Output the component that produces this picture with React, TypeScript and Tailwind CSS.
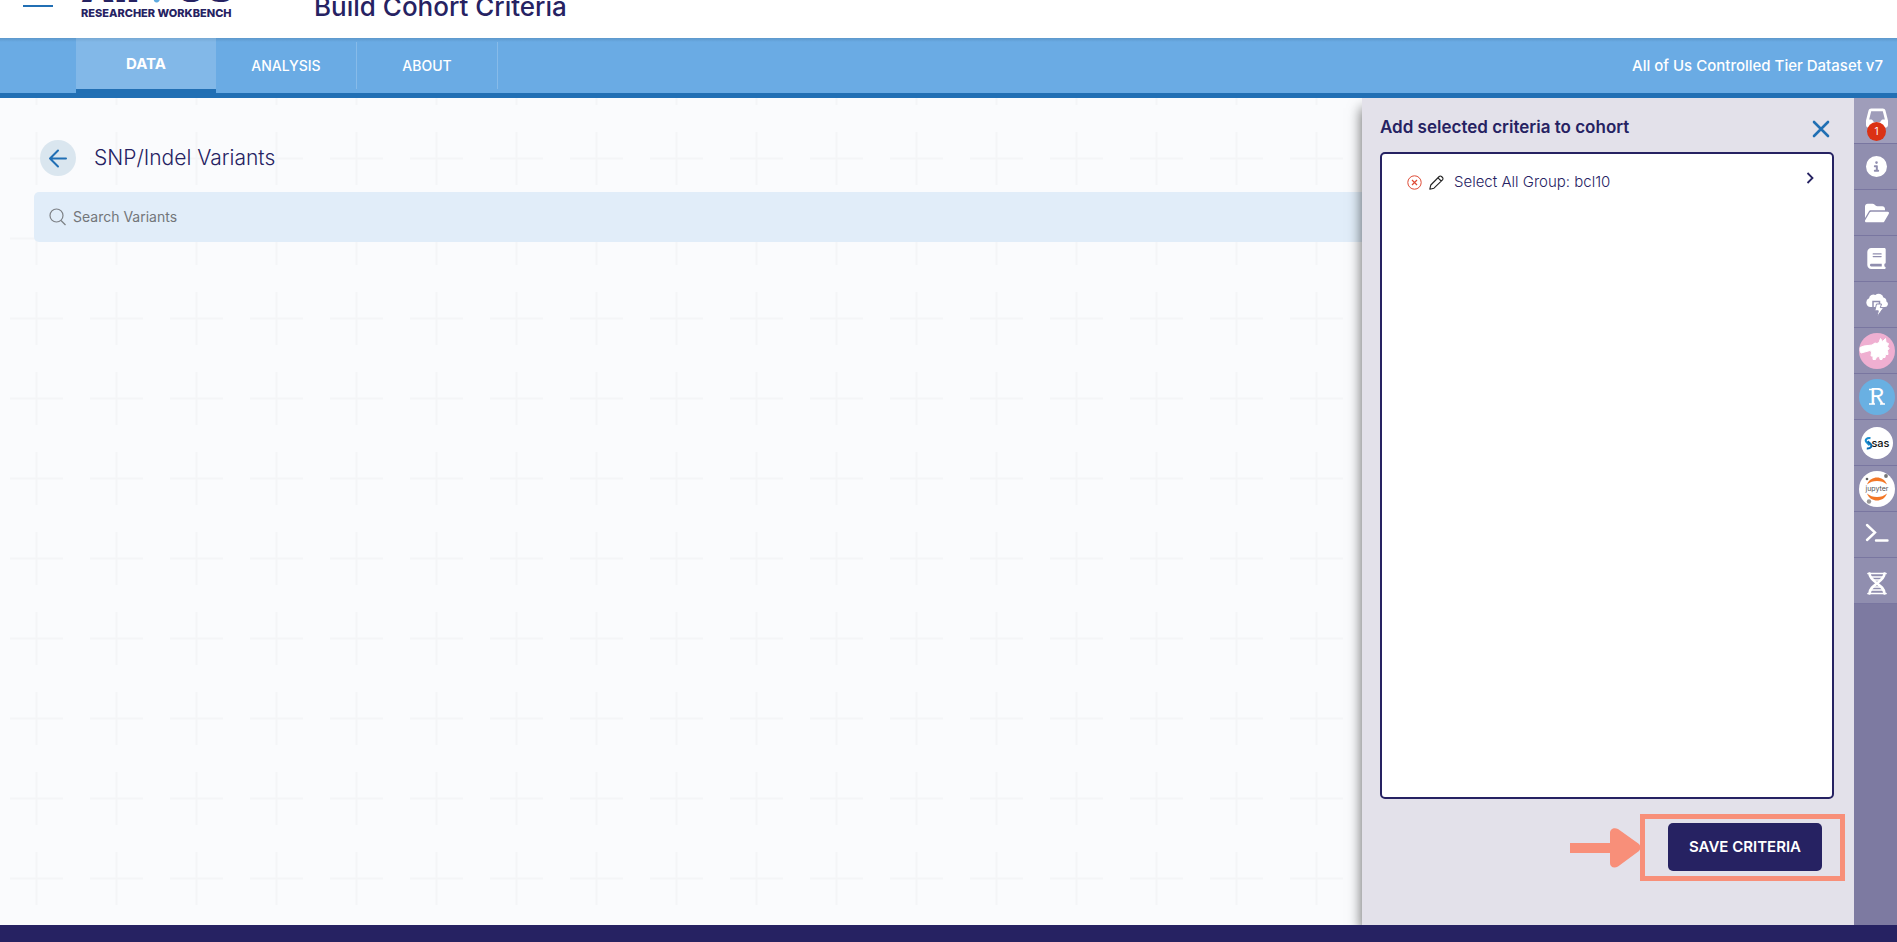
import React from "react";
import { FaInbox, FaCircleInfo, FaFolderOpen, FaBook } from "react-icons/fa6";

const tabs = ["ANALYSIS", "ABOUT"];

function GridPattern() {
  return (
    <svg className="absolute inset-0 h-full w-full" aria-hidden="true">
      <defs>
        <pattern id="crosses" width="80" height="80" x="-4" y="20" patternUnits="userSpaceOnUse">
          <path d="M14 40.5H67" stroke="#f4f5f7" strokeWidth="2" />
          <path d="M40.5 14V67" stroke="#f4f5f7" strokeWidth="2" />
        </pattern>
      </defs>
      <rect width="100%" height="100%" fill="url(#crosses)" />
    </svg>
  );
}

function CloudIcon() {
  return (
    <svg width="24" height="24" viewBox="0 0 24 24">
      <path
        d="M5.500 14a4.600 4.600 0 0 1-1.400-8.800A4.200 4.200 0 0 1 10.400 2a4.800 4.800 0 0 1 8 2.600 3.800 3.800 0 0 1 3 3.800 3 3 0 0 1-1.400 5.600Z"
        fill="#fff"
      />
      <path d="M8 16V8.500h6.500V12" fill="none" stroke="#908eaf" strokeWidth="1.500" />
      <path d="M11.500 11h5l-1.200 3.600h3.400L12 24l1.300-6.200H9.800Z" fill="#fff" stroke="#908eaf" strokeWidth="1" />
    </svg>
  );
}

function PigIcon() {
  return (
    <svg width="36" height="36" viewBox="0 0 36 36">
      <circle cx="18" cy="18" r="18" fill="#efafd1" />
      <path
        d="M1 14.500 5 13l8-1 3-2 2 .5 2-1 1.500-4 2 3 3-3 .5 4 2.500 1-1 3 1.500 2-1.500 2 .5 4-2.500 0-.5 3-2.500 0-.5 2-2 0-.5-3-3 .5-1 2.500-2.500 0 0-3.500-2 0 .5-4-1.500-1.500-9 2.500-1-2.500Z"
        fill="#fff"
        stroke="#fff"
        strokeLinejoin="round"
      />
    </svg>
  );
}

function RIcon() {
  return (
    <svg width="36" height="36" viewBox="0 0 36 36">
      <circle cx="18" cy="18" r="18" fill="#69b0e2" />
      <text x="18" y="25" textAnchor="middle" fontSize="24" fill="#fff" fontFamily="'Liberation Mono', monospace">
        R
      </text>
      <path d="M10 10.500h4M10 25h6M21 25h5" stroke="#fff" strokeWidth="1.300" />
    </svg>
  );
}

function SasIcon() {
  return (
    <svg width="32" height="32" viewBox="0 0 32 32">
      <circle cx="16" cy="16" r="16" fill="#fff" />
      <path d="M9.500 11.200C6 10.400 3.600 13 5.400 15l3.200 3.200" fill="none" stroke="#1c8fd0" strokeWidth="2" />
      <path d="M6.600 14.200 9.600 17c2 2.200.2 4.800-3.800 4.400" fill="none" stroke="#0b6cb4" strokeWidth="2" />
      <text x="19.500" y="20" textAnchor="middle" fontSize="11" fontWeight="500" fill="#111" fontFamily="Inter, sans-serif">
        sas
      </text>
    </svg>
  );
}

function JupyterIcon() {
  return (
    <svg width="36" height="36" viewBox="0 0 36 36">
      <circle cx="18" cy="18" r="18" fill="#fff" />
      <path d="M8 13.500C10 8.500 14 6.500 18 6.500S26 8.500 28 13.500C25 11 22 10 18 10S11 11 8 13.500Z" fill="#f37726" />
      <path d="M8 22.500C10 27.500 14 29.500 18 29.500S26 27.500 28 22.500C25 25 22 26 18 26S11 25 8 22.500Z" fill="#f37726" />
      <circle cx="8" cy="8" r="1.300" fill="#616262" />
      <circle cx="27" cy="5" r="1.900" fill="#767677" />
      <circle cx="10" cy="30.500" r="2.200" fill="#989798" />
      <text x="18" y="19.500" textAnchor="middle" fontSize="7" fill="#4e4e4e" fontFamily="Inter, sans-serif">
        jupyter
      </text>
    </svg>
  );
}

function TerminalIcon() {
  return (
    <svg width="24" height="24" viewBox="0 0 24 24" fill="none" stroke="#fff" strokeWidth="2.400" strokeLinecap="round">
      <path d="m2 2 8 7.500L2 17M11 17.500h11.500" />
    </svg>
  );
}

function DnaIcon() {
  return (
    <svg width="20" height="28" viewBox="0 0 20 28" fill="none" stroke="#fff" strokeLinecap="round">
      <path d="M2.500 6.500c0 8.500 15 11 15 20M17.500 6.500c0 8.500-15 11-15 20" strokeWidth="2.600" />
      <path d="M1 6.500h18M4 10h12M6.500 13h7M6.500 20h7M4 23h12M1 26.500h18" strokeWidth="1.700" />
    </svg>
  );
}

const railItems = [
  { label: "Info", icon: <FaCircleInfo size={21} /> },
  { label: "Files", icon: <FaFolderOpen size={24} /> },
  { label: "Data dictionary", icon: <FaBook size={21} /> },
  { label: "Cloud environment", icon: <CloudIcon /> },
  { label: "Hail", icon: <PigIcon /> },
  { label: "RStudio", icon: <RIcon /> },
  { label: "SAS", icon: <SasIcon /> },
  { label: "Jupyter", icon: <JupyterIcon /> },
  { label: "Terminal", icon: <TerminalIcon /> },
  { label: "Genomic extractions", icon: <DnaIcon /> },
];

export default function App() {
  return (
    <div className="flex min-h-screen flex-col bg-[#fafbfd] font-['Inter',sans-serif] text-[#262262]">
      <header className="flex h-[38px] items-end overflow-hidden bg-white pl-[23px]">
        <button aria-label="Menu" className="mb-[31px] h-[2px] w-[30px] bg-[#216fb4]" />
        <div className="ml-7 flex w-[153px] flex-col pb-[19px]">
          <div className="flex items-end justify-between pb-1 text-[42px] leading-8 font-black">
            <span>All</span>
            <svg width="8" height="20" viewBox="0 0 8 20" aria-hidden="true">
              <path d="M7 0C8.500 12 8 18.500 4 19.500 1 20 0 17 1 13Z" fill="#5fabe0" />
            </svg>
            <span>US</span>
          </div>
          <span className="text-[11px] leading-3 font-extrabold whitespace-nowrap">RESEARCHER WORKBENCH</span>
        </div>
        <h1 className="ml-20 pb-[15px] text-[26px] leading-8 font-medium">Build Cohort Criteria</h1>
      </header>

      <nav className="flex h-[60px] items-stretch border-b-[5px] border-[#216fb4] bg-[#6aabe4] bg-[linear-gradient(#5d98cb,#6aabe4_4px)] pr-3.5 pl-[76px] text-sm font-medium text-white">
        <a
          href="#data"
          className="flex w-[140px] items-center justify-center border-b-4 border-[#216fb4] bg-white/16 text-[15px] font-bold"
        >
          DATA
        </a>
        {tabs.map((t) => (
          <a
            key={t}
            href={`#${t.toLowerCase()}`}
            className="my-1 flex w-[141px] items-center justify-center border-r border-white/20"
          >
            {t}
          </a>
        ))}
        <span className="ml-auto self-center text-[15px]">All of Us Controlled Tier Dataset v7</span>
      </nav>

      <div className="flex flex-1">
        <main className="relative flex-1">
          <GridPattern />
          <div className="relative pt-[42px] pl-[34px]">
            <div className="flex h-9 items-center pl-1.5">
              <button aria-label="Back" className="flex size-9 items-center justify-center rounded-full bg-[#dae6ef]">
                <svg width="20" height="20" viewBox="0 0 20 20" fill="none" stroke="#216fb4" strokeWidth="2" strokeLinecap="round" strokeLinejoin="round">
                  <path d="M18 10.500H2M10 2.500l-8 8 8 8" />
                </svg>
              </button>
              <h2 className="ml-[18px] text-[21px] font-light">SNP/Indel Variants</h2>
            </div>
            <label className="mt-4 flex h-[50px] items-center rounded-l-[5px] bg-[#e1edf9] pl-[15px]">
              <svg width="18" height="18" viewBox="0 0 18 18" fill="none" stroke="#7d8186" strokeWidth="1.200">
                <circle cx="7.500" cy="7.500" r="6.500" />
                <path d="m12 12.500 4.500 4.500" />
              </svg>
              <input
                aria-label="Search Variants"
                placeholder="Search Variants"
                className="ml-1.5 flex-1 bg-transparent text-sm outline-none placeholder:text-[#73767a]"
              />
            </label>
          </div>
        </main>

        <aside className="relative flex w-[492px] flex-col bg-[#e3e1ea] pr-5 pb-[54px] pl-[18px] shadow-[-3px_8px_12px_-2px_rgba(0,0,0,0.55)] [clip-path:inset(0_0_0_-20px)]">
          <div className="flex h-[54px] items-center justify-between">
            <h3 className="pt-1 text-[17px] leading-6 font-semibold">Add selected criteria to cohort</h3>
            <button aria-label="Close" className="pt-2 pr-1">
              <svg width="18" height="18" viewBox="0 0 18 18" stroke="#216fb4" strokeWidth="2.600" strokeLinecap="round">
                <path d="m2 2 14 14M16 2 2 16" />
              </svg>
            </button>
          </div>
          <div className="flex-1 rounded-[5px] border-2 border-[#262262] bg-white py-[18px] pr-[18px] pl-[25px]">
            <div className="flex h-5 items-center">
              <button aria-label="Remove">
                <svg width="15" height="15" viewBox="0 0 15 15" fill="none" stroke="#de4a35">
                  <circle cx="7.500" cy="7.500" r="6.700" />
                  <path d="m5 5 5 5M10 5l-5 5" strokeWidth="1.200" />
                </svg>
              </button>
              <button aria-label="Edit" className="ml-[7px]">
                <svg width="15" height="15" viewBox="0 0 15 15" fill="none" stroke="#222" strokeWidth="1.100" strokeLinejoin="round">
                  <path d="M.8 14.200 1.800 10 10.200 1.500a1.600 1.600 0 0 1 2.300 0l1 1a1.600 1.600 0 0 1 0 2.300L5 13.200ZM9 2.800l3.200 3.200" />
                </svg>
              </button>
              <span className="ml-2.5 text-[15px] font-light">Select All Group: bcl10</span>
              <button aria-label="Open" className="mb-2 ml-auto">
                <svg width="8" height="12" viewBox="0 0 8 12" fill="none" stroke="#262262" strokeWidth="1.800">
                  <path d="m1.500 1 5 5-5 5" />
                </svg>
              </button>
            </div>
          </div>
          <div className="relative mt-6 mr-3 self-end">
            <button className="h-12 w-[154px] rounded-[5px] bg-[#262262] text-[15px] font-semibold text-white">
              SAVE CRITERIA
            </button>
            <div className="pointer-events-none absolute -top-[9px] -right-[23px] -bottom-[10px] -left-7 border-[5px] border-[#f88f79]" />
            <svg className="absolute top-1 -left-[98px]" width="72" height="42" viewBox="0 0 72 42" fill="#f88f79" aria-hidden="true">
              <path d="M0 16h40V6c0-4 4-6 8-4l21 15q3 3.500 0 7L48 39.500c-4 2.500-8 .5-8-3.500V26H0Z" />
            </svg>
          </div>
        </aside>

        <div className="w-[43px] bg-[#7d7aa1]">
          <button
            aria-label="Selected criteria"
            className="relative flex h-[46px] w-full justify-center border-b border-[#7976a0] bg-[#9f9dba] pt-[9px] pl-0.5 text-white"
          >
            <FaInbox size={22} />
            <span className="absolute top-6 left-[13px] flex size-[19px] items-center justify-center rounded-full bg-[#db3214] text-[10px]">
              1
            </span>
          </button>
          {railItems.map((r) => (
            <button
              key={r.label}
              aria-label={r.label}
              className="flex h-[46px] w-full items-center justify-center border-b border-[#7976a0] bg-[#908eaf] pl-0.5 text-white"
            >
              {r.icon}
            </button>
          ))}
        </div>
      </div>

      <footer className="h-[17px] bg-[#262262]" />
    </div>
  );
}
